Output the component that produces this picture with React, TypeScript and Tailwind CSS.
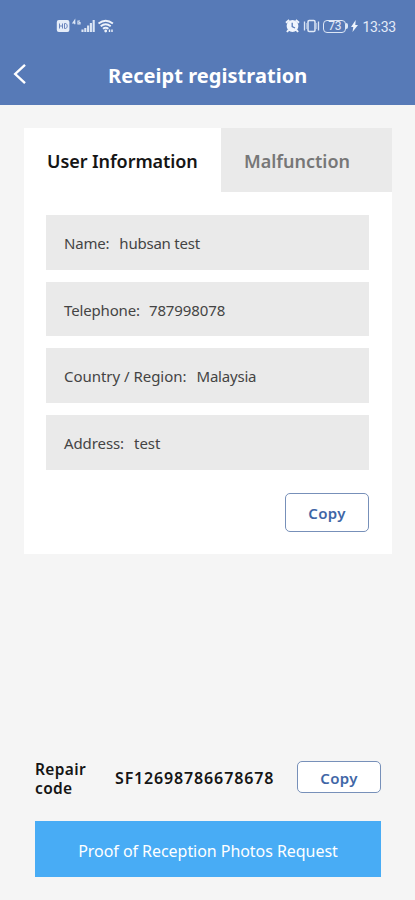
import React from "react";

const fields = [
  { label: "Name", value: "hubsan test", gap: "ml-[10px]", labelTrack: "tracking-[-0.2px]", valueTrack: "tracking-[-0.22px]" },
  { label: "Telephone", value: "787998078", gap: "ml-[9px]", labelTrack: "tracking-[-0.15px]", valueTrack: "tracking-[-0.1px]" },
  { label: "Country / Region", value: "Malaysia", gap: "ml-[10px]", labelTrack: "tracking-[-0.03px]", valueTrack: "tracking-[-0.2px]" },
  { label: "Address", value: "test", gap: "ml-[10px]", labelTrack: "tracking-[-0.1px]", valueTrack: "tracking-[0px]" },
];

function StatusLeft() {
  return (
    <svg width="58" height="16" viewBox="0 0 58 16" fill="none" className="shrink-0">
      <rect x="0.8" y="2" width="12.600" height="12" rx="2" fill="#e4ecf8" />
      <path d="M3.500 5.500v5M6.500 5.500v5M3.500 8h3M8.500 5.500v5h0.700c1.200 0 2-.8 2-2.500s-.8-2.500-2-2.500h-0.700" stroke="#6a85bd" strokeWidth="1" />
      <path d="M18.700 6.300V2.500L17 5h2.500M24 3h-2v3h2V4.500h-1" stroke="#dce6f5" strokeWidth="1.200" />
      <path d="M26.500 14v-2.500M29.300 14v-4M32.100 14V7.500M34.900 14V5M37.700 14V2" stroke="#dce6f5" strokeWidth="2.100" />
      <path d="M42.500 5.500q7.200-5.500 14.400 0M44.700 8.300q5-4 10 0M47 10.800q2.700-2.200 5.400 0" stroke="#eef3fb" strokeWidth="1.900" />
      <circle cx="49.700" cy="13" r="1.400" fill="#eef3fb" />
      <path d="M53.500 11.500v2.500M56 11.500v2.500" stroke="#eef3fb" strokeWidth="1.400" />
    </svg>
  );
}

function AlarmIcon() {
  return (
    <svg width="15" height="16" viewBox="0 0 15 16" fill="none" className="shrink-0">
      <circle cx="7.500" cy="8" r="5.900" fill="#f0f5fd" />
      <path d="M1 4.700L4.200 2M14 4.700L10.800 2M3.500 12L2 14M11.500 12l1.500 2" stroke="#f0f5fd" strokeWidth="2" />
      <path d="M7.200 4.800v3.700L10 10" stroke="#587bb8" strokeWidth="1.300" />
    </svg>
  );
}

function VibrateIcon() {
  return (
    <svg width="17" height="16" viewBox="0 0 17 16" fill="none" className="shrink-0">
      <rect x="5" y="2.500" width="7" height="11" rx="1.200" stroke="#e0e9f7" strokeWidth="1.500" />
      <path d="M1.500 3.500v9M15.500 3.500v9" stroke="#dce6f5" strokeWidth="1.300" />
      <path d="M3.400 5v6M13.600 5v6" stroke="#b7c8e5" strokeWidth="0.800" />
    </svg>
  );
}

function CopyButton({ className }: { className: string }) {
  return (
    <button className={"flex w-[84px] items-center justify-center rounded-[5px] border border-[#7790b9] bg-white text-[15px] font-semibold leading-5 text-[#3f66a6] " + className}>
      <span className="tracking-[0.3px]">Copy</span>
    </button>
  );
}

export default function App() {
  return (
    <div className="flex h-[900px] w-[415px] flex-col overflow-hidden bg-[#f5f5f5] font-['Noto_Sans','Open_Sans',sans-serif] whitespace-nowrap">
      <header className="h-[105px] shrink-0 bg-[#577ab7] text-white">
        <div className="flex h-[52px] items-center justify-between pl-14 pr-[19px]">
          <StatusLeft />
          <div className="flex items-center text-[#e3ebf8]">
            <AlarmIcon />
            <div className="w-[3px]" />
            <VibrateIcon />
            <div className="ml-[3px] flex h-[13px] w-[23px] items-center justify-center rounded-[4px] border border-[#dce6f5] font-['Roboto',sans-serif] text-[12px] leading-none">73</div>
            <div className="h-[6px] w-0.5 rounded-r-full bg-[#dce6f5]" />
            <svg width="7" height="12" viewBox="0 0 7 12" className="ml-[3px] shrink-0" fill="#edf3fc">
              <path d="M4.700 0L0 7h2.300L1.500 12 7 5H4.300z" />
            </svg>
            <span className="ml-1 pt-px font-['Roboto',sans-serif] text-[14px] leading-4 tracking-[-0.25px]">13:33</span>
          </div>
        </div>
        <div className="flex h-[46px] items-center">
          <svg width="14" height="22" viewBox="0 0 14 22" fill="none" className="ml-[13px] -mt-0.5 shrink-0">
            <path d="M12 1.800L2.200 11l9.800 9.200" stroke="white" strokeWidth="2.400" />
          </svg>
          <h1 className="ml-[81px] pt-0.5 text-[20px] font-bold leading-6 tracking-[0.05px]">Receipt registration</h1>
        </div>
      </header>

      <main className="ml-6 mt-[23px] h-[426px] w-[368px] shrink-0 bg-white">
        <nav className="flex h-16">
          <div className="flex w-[197px] items-center pl-[23px] pt-px text-[18px] font-semibold leading-6 text-[#151515]"><span className="tracking-[-0.07px]">User Information</span></div>
          <div className="flex w-[171px] items-center bg-[#eaeaea] pl-[23px] pt-px text-[18px] font-semibold leading-6 text-[#777777]"><span className="tracking-[0px]">Malfunction</span></div>
        </nav>
        <div className="mt-[23px] flex flex-col gap-3 px-[22px]">
          {fields.map((f) => (
            <div key={f.label} className="flex h-[54.700px] w-[323px] items-center bg-[#eaeaea] pl-[18px] pt-px text-[15px] leading-5 text-[#444444]">
              <span className={f.labelTrack}>{f.label}:</span>
              <span className={f.gap + " " + f.valueTrack}>{f.value}</span>
            </div>
          ))}
        </div>
        <div className="mt-[23px] flex justify-end pr-[23px]">
          <CopyButton className="h-[39px] pt-0.5" />
        </div>
      </main>

      <footer className="mt-auto flex shrink-0 flex-col gap-7 pb-[23px] pl-[35px] pr-[34px]">
        <div className="flex h-8 items-center">
          <div className="mr-5 w-[60px] whitespace-normal pt-1 text-[15.500px] font-semibold leading-[19px] tracking-[0.35px] text-[#151515]">Repair code</div>
          <div className="pt-0.5 text-[16px] font-semibold leading-5 text-[#151515]"><span className="tracking-[0.85px]">SF12698786678678</span></div>
          <CopyButton className="ml-auto h-8 pt-0.5" />
        </div>
        <button className="flex h-14 items-center justify-center bg-[#48acf5] pt-[3px] text-[16px] leading-6 text-white"><span className="tracking-[-0.05px]">Proof of Reception Photos Request</span></button>
      </footer>
    </div>
  );
}
